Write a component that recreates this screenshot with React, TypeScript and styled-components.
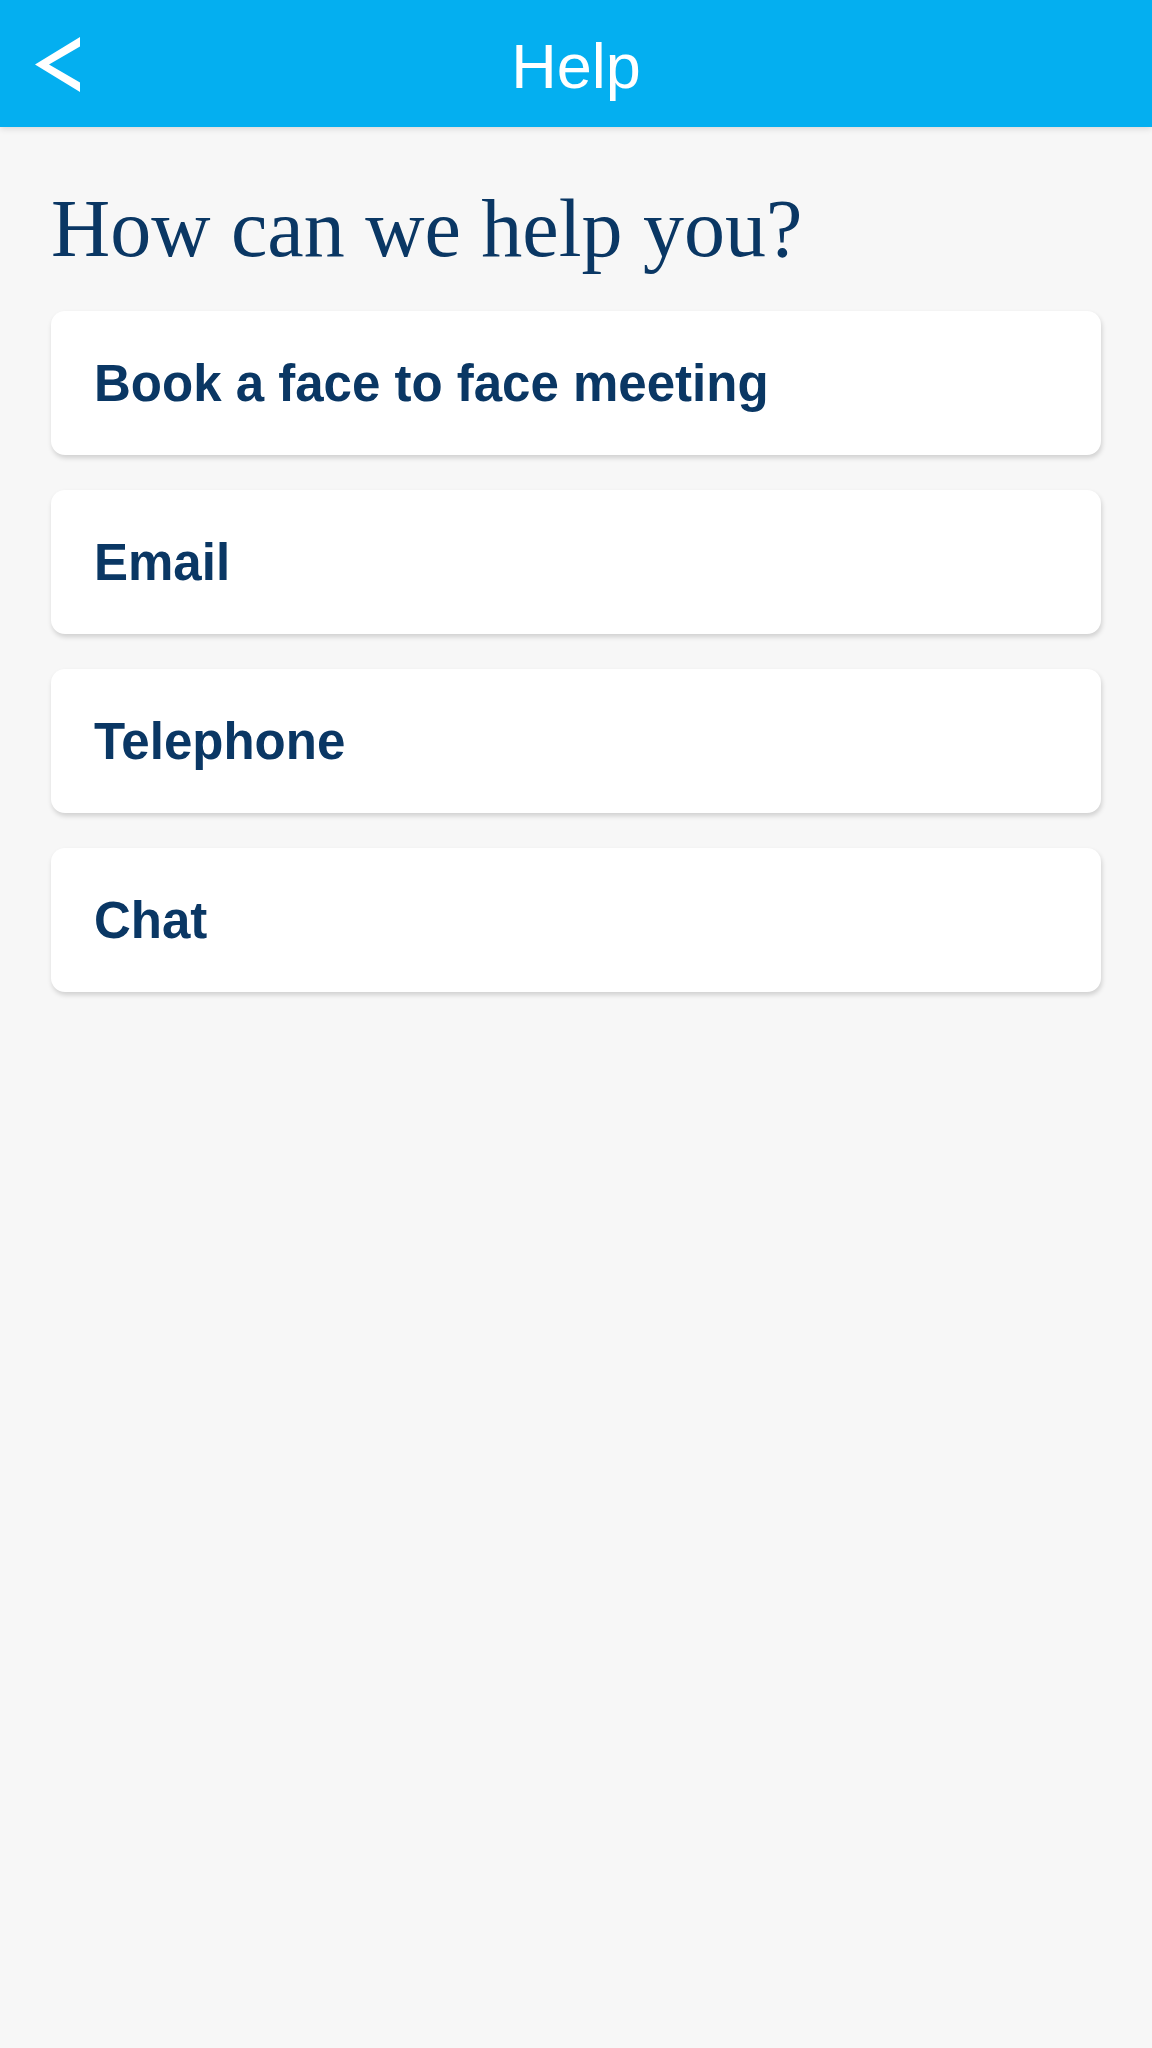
import styled, { createGlobalStyle } from "styled-components";

const GlobalStyle = createGlobalStyle`
  html, body {
    margin: 0;
    padding: 0;
    background: #f7f7f7;
  }
  #root {
    min-height: 100vh;
  }
`;

const Page = styled.div`
  display: flex;
  flex-direction: column;
  min-height: 100vh;
  background: #f7f7f7;
`;

const TopBar = styled.header`
  position: relative;
  display: flex;
  align-items: center;
  justify-content: center;
  height: 127px;
  background: #04aff0;
  box-shadow: 0 2px 6px rgba(0, 0, 0, 0.12);
`;

const BackButton = styled.button`
  position: absolute;
  left: 35px;
  top: 37px;
  display: flex;
  padding: 0;
  border: none;
  background: none;
  cursor: pointer;
`;

const Title = styled.h1`
  margin: 0;
  padding-top: 5px;
  font-family: "Liberation Sans", Arial, sans-serif;
  font-size: 63px;
  font-weight: 400;
  line-height: 1;
  color: #ffffff;
`;

const Content = styled.main`
  display: flex;
  flex-direction: column;
  padding: 61px 51px 0;
`;

const Heading = styled.h2`
  margin: 0 0 41px;
  font-family: "Liberation Serif", "Times New Roman", serif;
  font-size: 82px;
  font-weight: 400;
  line-height: 1;
  color: #0a3764;
`;

const OptionList = styled.div`
  display: flex;
  flex-direction: column;
  gap: 35px;
`;

const OptionCard = styled.button`
  display: flex;
  align-items: center;
  height: 144px;
  padding: 0 0 0 43px;
  border: none;
  border-radius: 14px;
  background: #ffffff;
  box-shadow: 1px 3px 5px rgba(0, 0, 0, 0.16);
  font-family: "Liberation Sans", Arial, sans-serif;
  font-size: 51px;
  font-weight: 700;
  color: #0a3764;
  text-align: left;
  cursor: pointer;
`;

const options = ["Book a face to face meeting", "Email", "Telephone", "Chat"];

const BackIcon = () => (
  <svg width="45" height="55" viewBox="0 0 45 55">
    <polygon points="0,27.5 45,0 45,9.5 14,27.5 45,45.5 45,55" fill="#ffffff" />
  </svg>
);

const App = () => {
  return (
    <Page>
      <GlobalStyle />
      <TopBar>
        <BackButton aria-label="Back">
          <BackIcon />
        </BackButton>
        <Title>Help</Title>
      </TopBar>
      <Content>
        <Heading>How can we help you?</Heading>
        <OptionList>
          {options.map((label) => (
            <OptionCard key={label}>{label}</OptionCard>
          ))}
        </OptionList>
      </Content>
    </Page>
  );
};

export default App;
